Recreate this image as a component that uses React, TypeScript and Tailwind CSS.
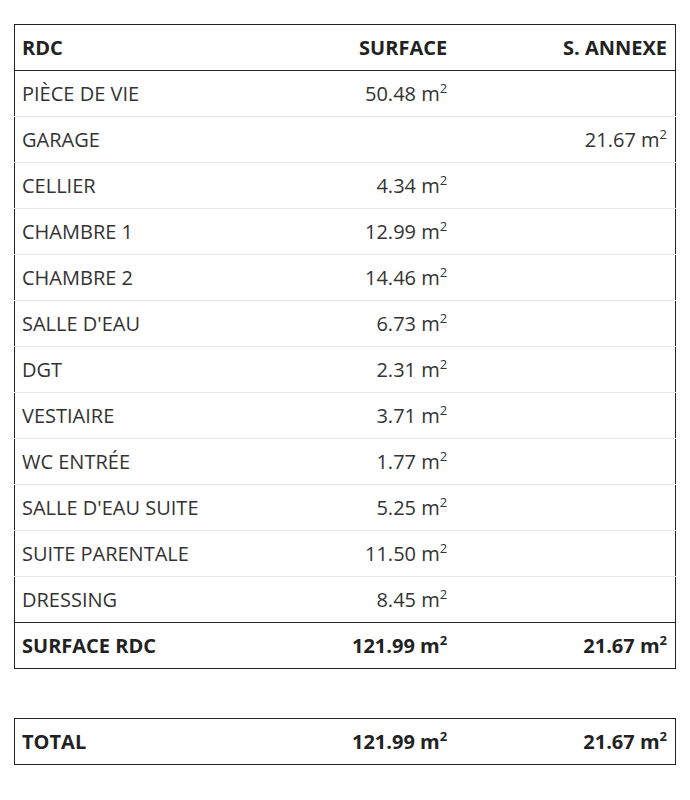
import React from "react";

const rows: [string, string, string][] = [
  ["PIÈCE DE VIE", "50.48", ""],
  ["GARAGE", "", "21.67"],
  ["CELLIER", "4.34", ""],
  ["CHAMBRE 1", "12.99", ""],
  ["CHAMBRE 2", "14.46", ""],
  ["SALLE D'EAU", "6.73", ""],
  ["DGT", "2.31", ""],
  ["VESTIAIRE", "3.71", ""],
  ["WC ENTRÉE", "1.77", ""],
  ["SALLE D'EAU SUITE", "5.25", ""],
  ["SUITE PARENTALE", "11.50", ""],
  ["DRESSING", "8.45", ""],
];

function Area({ v }: { v: string }) {
  if (!v) return null;
  return (
    <span>
      {v} m<sup className="text-[13px] top-[-0.55em]">2</sup>
    </span>
  );
}

export default function App() {
  return (
    <div
      className="bg-white w-[690px] h-[800px] pt-[24px] px-[14px] text-[#333] text-[20px] leading-[28px]"
      style={{ fontFamily: '"Open Sans", "Noto Sans", sans-serif' }}
    >
      <table className="w-[662px] table-fixed border-collapse border border-[#222]">
        <thead>
          <tr className="h-[46px] border-b border-[#222]">
            <th className="text-left font-bold pl-[7px] pr-[8px] text-[#222]">RDC</th>
            <th className="text-right font-bold px-[8px] text-[#222]">SURFACE</th>
            <th className="text-right font-bold px-[8px] text-[#222]">S. ANNEXE</th>
          </tr>
        </thead>
        <tbody>
          {rows.map(([n, s, a], i) => (
            <tr
              key={n}
              className={
                "h-[46px] " +
                (i < rows.length - 1 ? "border-b border-[#e6e6e6]" : "border-b border-[#222]")
              }
            >
              <td className="text-left pl-[7px] pr-[8px]">{n}</td>
              <td className="text-right px-[8px]">
                <Area v={s} />
              </td>
              <td className="text-right px-[8px]">
                <Area v={a} />
              </td>
            </tr>
          ))}
          <tr className="h-[46px] font-bold text-[#222]">
            <td className="text-left pl-[7px] pr-[8px]">SURFACE RDC</td>
            <td className="text-right px-[8px]">
              <Area v="121.99" />
            </td>
            <td className="text-right px-[8px]">
              <Area v="21.67" />
            </td>
          </tr>
        </tbody>
      </table>
      <table className="mt-[49px] w-[662px] table-fixed border-collapse border border-[#222]">
        <tbody>
          <tr className="h-[46px] font-bold text-[#222]">
            <td className="text-left pl-[7px] pr-[8px]">TOTAL</td>
            <td className="text-right px-[8px]">
              <Area v="121.99" />
            </td>
            <td className="text-right px-[8px]">
              <Area v="21.67" />
            </td>
          </tr>
        </tbody>
      </table>
    </div>
  );
}
